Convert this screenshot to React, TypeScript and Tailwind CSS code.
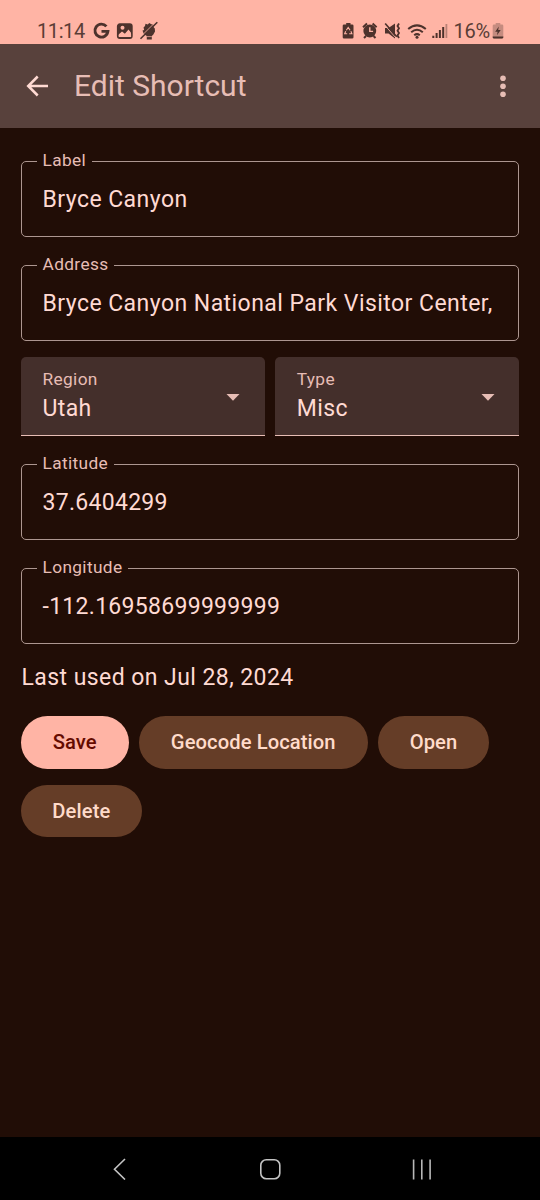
import React from "react";

function Field({ label, value, numeric = false }: { label: string; value: string; numeric?: boolean }) {
  return (
    <fieldset className="h-[86px] min-w-0 rounded-[5px] border border-[#ad9690] pl-[15px]">
      <legend className="h-5 pr-[6px] pl-[5.5px] text-[17.3px] leading-[18px] tracking-[0.36px] text-[#e7bdb5]">{label}</legend>
      <div className={`pt-[13px] pl-[5.5px] text-[23px] leading-8 whitespace-nowrap ${numeric ? "tracking-[0.29px]" : "tracking-[0.45px]"}`}>
        {value}
      </div>
    </fieldset>
  );
}

function Select({ label, value }: { label: string; value: string }) {
  return (
    <div className="flex h-[79px] flex-1 items-center justify-between rounded-t-[5px] border-b border-[#e7bdb5] bg-[#442f2b] pr-[24.5px] pl-[21.5px]">
      <div className="pt-0.5">
        <div className="-mt-0.5 mb-0.5 text-[17.3px] leading-6 tracking-[0.36px] text-[#e7bdb5]">{label}</div>
        <div className="text-[23px] leading-8 tracking-[0.39px]">{value}</div>
      </div>
      <svg className="mt-0.5 h-[7px] w-[14px]" viewBox="0 0 14 7">
        <path d="M0.5 0h13L7 6.7z" fill="#e7bdb5" />
      </svg>
    </div>
  );
}

function Button({ label, width, primary = false }: { label: string; width: string; primary?: boolean }) {
  return (
    <button
      className={`${width} h-[52.5px] rounded-full text-[20.2px] font-medium tracking-[0.08px] whitespace-nowrap ${
        primary ? "bg-[#ffb4a5] text-[#650b00]" : "bg-[#653d27] text-[#ffdbca]"
      }`}
    >
      {label}
    </button>
  );
}

function StatusBar() {
  return (
    <div className="flex h-[44px] items-start bg-[#ffb4a5] pt-[18px] text-[#5a3d36]">
      <span className="ml-[37px] w-[55px] text-[20px] leading-[26px] tracking-[-0.4px] whitespace-nowrap">11:14</span>
      <svg className="h-[26px] w-[70px]" viewBox="0 0 70 26" fill="none">
        <path d="M14.4 8.4A6.5 6.5 0 1 0 15.9 13.4H9.5" stroke="#4d322c" strokeWidth="2.9" />
        <rect x="25.8" y="6.2" width="14" height="13.8" rx="2" stroke="#4d322c" strokeWidth="1.8" />
        <path d="M26 6h14v10l-3.5-4.600-3.600 4.300-2.900-2.200L26 17z" fill="#4d322c" />
        <circle cx="30.5" cy="9.7" r="2" fill="#ffb4a5" />
        <path d="M26.800 16.800l3.200-2.500 3 2.300 3.500-4.200 2.600 3.300v3.400H26.800z" fill="#ffb4a5" />
        <path d="M51.500 9.500l1.500-1.500.5-2.200 2.300.6L57.200 5l2.200 1.200 1.800.3.300 2.600 1.300 1.500.2 3-1.800 3.200-1.400 1.200v3.600h-5v-3.600l-3-2-1.300-3.500 1.700-.5z" fill="#4d322c" />
        <path d="M48.500 19L63 4.600" stroke="#ffb4a5" strokeWidth=".9" />
        <path d="M48.500 20.700L65.300 4.200" stroke="#4d322c" strokeWidth="1.600" />
        <path d="M54.800 18.600h5" stroke="#ffb4a5" strokeWidth=".7" />
      </svg>
      <svg className="ml-[180px] h-[26px] w-[108px]" viewBox="0 0 108 26" fill="none">
        <path d="M2.500 6.500h1.700V5h4.300v1.500h1.700q1.300 0 1.300 1.300v11.400q0 1.300-1.300 1.300H2q-1.300 0-1.300-1.300V7.800q0-1.300 1.300-1.300z" fill="#4d322c" />
        <path d="M4.300 12.300l1.900-2.800 1.900 2.800m.8 1l1 2.400H7.200m-2 0H2.700l1-2.400" stroke="#ffb4a5" strokeWidth="1.100" />
        <circle cx="27.8" cy="13" r="6.400" fill="#4d322c" />
        <path d="M21 9.200l4-3.600m9.600 3.600l-4-3.600M24 18l-2 2m9.500-2l2 2" stroke="#4d322c" strokeWidth="2" />
        <path d="M27.800 9.200v4.200h3.300" stroke="#ffb4a5" strokeWidth="1.400" />
        <path d="M43 10h3.500L53 5.500v15l-6.500-5H43z" fill="#4d322c" />
        <path d="M42.800 7.200l11.800 13.500" stroke="#ffb4a5" strokeWidth=".9" />
        <path d="M43.200 5.500l11.600 13.300" stroke="#4d322c" strokeWidth="1.700" />
        <path d="M57 5.500l-1.500 2.400 1.500 2.400-1.500 2.400 1.500 2.400-1.500 2.400 1.500 2.400" stroke="#4d322c" strokeWidth="1.800" />
        <path d="M66.200 11.100q8.800-7.500 17.600 0M69.200 14.300q5.800-5 11.600 0M72.200 17.200q2.800-2.200 5.600 0" stroke="#4d322c" strokeWidth="2" />
        <circle cx="75" cy="19.300" r="1.500" fill="#4d322c" />
        <path d="M91.300 17.800V20M94.600 15v5M97.900 12v8M101.200 9v11" stroke="#4d322c" strokeWidth="2" />
        <path d="M104.400 6v14" stroke="#4d322c" strokeOpacity=".4" strokeWidth="1.800" />
      </svg>
      <span className="ml-[3.5px] w-[38.5px] text-[20px] leading-[26px] tracking-[-0.2px] whitespace-nowrap">16%</span>
      <svg className="h-[26px] w-[12px]" viewBox="0 0 12 26">
        <path d="M2 6.500h1.700V5h4.600v1.500H10q1.300 0 1.300 1.300v11.400q0 1.300-1.300 1.300H2q-1.300 0-1.300-1.300V7.800q0-1.300 1.300-1.300z" fill="#c58b7f" />
        <path d="M.7 18.500h10.600v1q-.3 1-1.300 1H2q-1 0-1.300-1zM6.800 8.500L3.200 13.700h2.400L5 17.300l3.700-5.200H6.200z" fill="#4d322c" />
      </svg>
    </div>
  );
}

export default function App() {
  return (
    <div className="flex h-[1200px] w-[540px] flex-col overflow-hidden bg-[#210d06] font-[Roboto,sans-serif] text-[#ffdad3]">
      <StatusBar />
      <header className="flex h-[84px] items-center bg-[#58413c]">
        <svg className="ml-[26px] h-[22px] w-[22px]" viewBox="0 0 22 22" fill="none" stroke="#ffdad3" strokeWidth="2.5">
          <path d="M11.7 1.5L2.2 11l9.5 9.5M2 11h20" />
        </svg>
        <h1 className="ml-[26px] flex-1 text-[30px] leading-10 text-[#e7bdb5]">Edit Shortcut</h1>
        <svg className="mr-[33px] h-[24px] w-[8px]" viewBox="0 0 8 24" fill="#e7bdb5">
          <circle cx="4" cy="4.2" r="2.8" />
          <circle cx="4" cy="12.2" r="2.8" />
          <circle cx="4" cy="20.2" r="2.8" />
        </svg>
      </header>
      <main className="flex flex-1 flex-col px-[21px] pt-[23px]">
        <Field label="Label" value="Bryce Canyon" />
        <div className="h-[18px]" />
        <Field label="Address" value="Bryce Canyon National Park Visitor Center," />
        <div className="mt-4 mb-[18px] flex gap-[10.5px]">
          <Select label="Region" value="Utah" />
          <Select label="Type" value="Misc" />
        </div>
        <Field label="Latitude" value="37.6404299" numeric />
        <div className="h-[18px]" />
        <Field label="Longitude" value="-112.16958699999999" numeric />
        <p className="mt-[18px] pl-[0.5px] text-[23px] leading-8 tracking-[0.43px]">Last used on Jul 28, 2024</p>
        <div className="mt-[22px] flex flex-wrap gap-x-[10.5px] gap-y-4">
          <Button label="Save" width="w-[107.5px]" primary />
          <Button label="Geocode Location" width="w-[228.5px]" />
          <Button label="Open" width="w-[111px]" />
          <Button label="Delete" width="w-[120.7px]" />
        </div>
      </main>
      <nav className="flex h-[63px] items-center bg-black">
        <svg className="ml-[112px] h-[22px] w-[14px]" viewBox="0 0 14 22" fill="none" stroke="#c4c4c4" strokeWidth="1.6">
          <path d="M13 1L2.5 11.3 13 21.5" />
        </svg>
        <svg className="ml-[133px] h-[22px] w-[22px]" viewBox="0 0 22 22" fill="none" stroke="#c4c4c4" strokeWidth="1.6">
          <rect x="1.8" y="1.8" width="19" height="19" rx="5.5" />
        </svg>
        <svg className="ml-[131px] h-[22px] w-[22px]" viewBox="0 0 22 22" fill="none" stroke="#b8b8b8" strokeWidth="1.6">
          <path d="M1.6 1.5v20M9.8 1.5v20M18.1 1.5v20" />
        </svg>
      </nav>
    </div>
  );
}
